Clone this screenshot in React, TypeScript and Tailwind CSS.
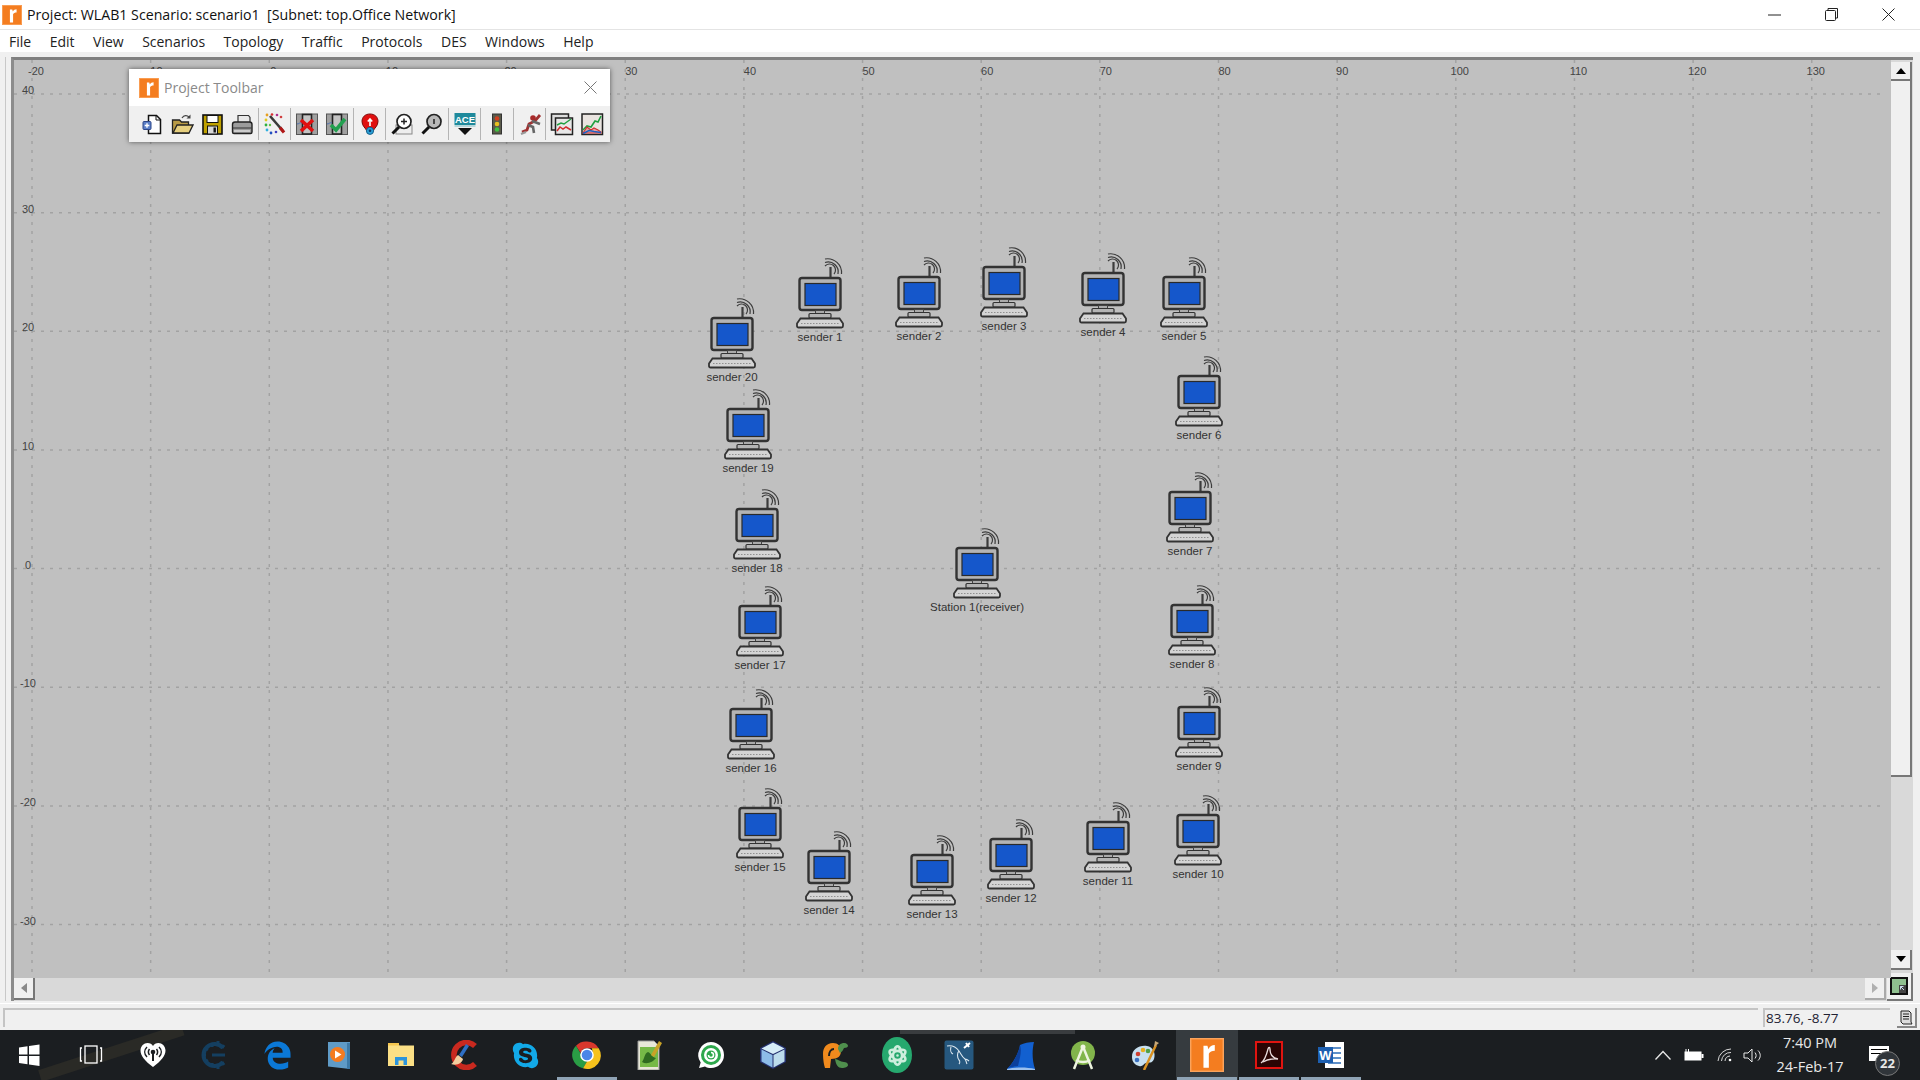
import { FaSkype, FaAtom } from 'react-icons/fa'
import { FaEdgeLegacy } from 'react-icons/fa6'

const menus = ['File', 'Edit', 'View', 'Scenarios', 'Topology', 'Traffic', 'Protocols', 'DES', 'Windows', 'Help']

// label centre in page pixels
const nodes = [
  { name: 'sender 1', x: 820, y: 337 },
  { name: 'sender 2', x: 919, y: 336 },
  { name: 'sender 3', x: 1004, y: 326 },
  { name: 'sender 4', x: 1103, y: 332 },
  { name: 'sender 5', x: 1184, y: 336 },
  { name: 'sender 6', x: 1199, y: 435 },
  { name: 'sender 7', x: 1190, y: 551 },
  { name: 'sender 8', x: 1192, y: 664 },
  { name: 'sender 9', x: 1199, y: 766 },
  { name: 'sender 10', x: 1198, y: 874 },
  { name: 'sender 11', x: 1108, y: 881 },
  { name: 'sender 12', x: 1011, y: 898 },
  { name: 'sender 13', x: 932, y: 914 },
  { name: 'sender 14', x: 829, y: 910 },
  { name: 'sender 15', x: 760, y: 867 },
  { name: 'sender 16', x: 751, y: 768 },
  { name: 'sender 17', x: 760, y: 665 },
  { name: 'sender 18', x: 757, y: 568 },
  { name: 'sender 19', x: 748, y: 468 },
  { name: 'sender 20', x: 732, y: 377 },
  { name: 'Station 1(receiver)', x: 977, y: 607 },
]

const CANVAS_X = 14
const CANVAS_Y = 60

const topLabels = ['-20', '-10', '0', '10', '20', '30', '40', '50', '60', '70', '80', '90', '100', '110', '120', '130']
const sideLabels = ['40', '30', '20', '10', '0', '-10', '-20', '-30']

function Station() {
  return (
    <svg width="60" height="74" viewBox="0 0 60 74" className="block">
      <g fill="none" stroke="#3c3c3c">
        <path d="M35 4a14 14 0 0 1 16.500 15" strokeWidth="1.200" />
        <path d="M35 7.500a10 10 0 0 1 13 11.500" strokeWidth="1.200" />
        <path d="M35 11a6 6 0 0 1 9 8" strokeWidth="1.200" />
        <path d="M40.500 12v11" strokeWidth="2.200" />
      </g>
      <rect x="9.500" y="23" width="41" height="32" rx="2.500" fill="#b4b4b4" stroke="#333" strokeWidth="2.400" />
      <rect x="15" y="28.500" width="31" height="22" fill="#1557cb" stroke="#2a2a2a" strokeWidth="1.200" />
      <rect x="25.500" y="55.500" width="9" height="3.500" fill="#aaa" stroke="#444" />
      <rect x="19" y="58.500" width="22" height="4.500" rx="1" fill="#b4b4b4" stroke="#333" strokeWidth="1.200" />
      <path d="M10.500 63.500h39l3.500 5v2.500c0 .8-.7 1.500-1.500 1.500h-43c-.8 0-1.500-.7-1.500-1.500v-2.500z" fill="#d4d4d4" stroke="#333" strokeWidth="1.800" />
      <path d="M11 68.500h38" stroke="#8f8f8f" strokeDasharray="1.500 1.500" />
    </svg>
  )
}

function Node({ name, x, y }: { name: string; x: number; y: number }) {
  return (
    <div className="absolute w-[140px] flex flex-col items-center" style={{ left: x - CANVAS_X - 70, top: y - CANVAS_Y - 82 }}>
      <Station />
      <span className="text-[11.5px] leading-[14px] mt-[1px] text-[#333] whitespace-nowrap" style={{ fontFamily: '"Liberation Sans", sans-serif' }}>{name}</span>
    </div>
  )
}

function LogoR({ size }: { size: number }) {
  return (
    <svg width={size} height={size} viewBox="0 0 24 24" className="block shrink-0">
      <rect width="24" height="24" fill="#f47d20" />
      <rect x="0.5" y="0.5" width="23" height="23" fill="none" stroke="#fba35c" />
      <path d="M9.500 21V5.500h2.800l.7 2.400C14 5.800 15.500 5 17.500 5v4c-2 0-3.600.6-4.200 2.200V21z" fill="#fff" />
    </svg>
  )
}

function ToolIcon({ n }: { n: number }) {
  const common = { width: 24, height: 24, viewBox: '0 0 24 24', className: 'block' }
  switch (n) {
    case 0:
      return (
        <svg {...common}>
          <path d="M8.500 3.500h8l4 4v14h-12z" fill="#fff" stroke="#111" strokeWidth="1.500" />
          <path d="M16 3.500v4.500h4.500" fill="none" stroke="#111" />
          <rect x="3" y="9.500" width="8" height="8" rx="1" fill="#5b7fc7" stroke="#2c4687" />
          <path d="M7 11.200v4.600M4.700 13.500h4.600" stroke="#fff" strokeWidth="1.400" />
        </svg>
      )
    case 1:
      return (
        <svg {...common}>
          <path d="M2.500 21V8h7l2 2h7v11z" fill="#b99b45" stroke="#222" strokeWidth="1.300" />
          <path d="M3 21l4-8h16l-4 8z" fill="#e6cf7e" stroke="#222" strokeWidth="1.300" />
          <path d="M12 6c2-3 5-3 7-1" fill="none" stroke="#444" strokeWidth="1.300" />
          <path d="M20.500 2.500v4h-4z" fill="#444" />
        </svg>
      )
    case 2:
      return (
        <svg {...common}>
          <rect x="3" y="3" width="19" height="19" fill="#bfa100" stroke="#111" strokeWidth="1.600" />
          <rect x="7" y="3.500" width="11" height="7" fill="#fff" stroke="#111" />
          <rect x="7.500" y="14" width="10" height="8" fill="#d8d8d8" stroke="#111" />
          <rect x="13.500" y="15.500" width="2.400" height="5" fill="#111" />
        </svg>
      )
    case 3:
      return (
        <svg {...common}>
          <path d="M8 11V3.500h10.500l1.500 2V11z" fill="#e8e8e8" stroke="#333" strokeWidth="1.200" />
          <path d="M2.500 12.500c0-1.500 1-2.500 2.500-2.500h14.500c1.500 0 2.500 1 2.500 2.500V20c0 1-.7 1.500-1.500 1.500H4c-1 0-1.500-.7-1.500-1.500z" fill="#9c9c9c" stroke="#222" strokeWidth="1.400" />
          <path d="M3 16h18.500" stroke="#333" />
          <path d="M4 19h16" stroke="#ddd" strokeWidth="1.500" />
        </svg>
      )
    case 4:
      return (
        <svg {...common}>
          <path d="M7 4l13 15" stroke="#3a3a3a" strokeWidth="2.600" />
          <path d="M17 15.500l4 5" stroke="#b01818" strokeWidth="3.200" />
          <g>
            <circle cx="4" cy="3" r="1.400" fill="#e8a020" />
            <circle cx="9" cy="2.500" r="1.300" fill="#d83030" />
            <circle cx="14" cy="3" r="1.300" fill="#b03090" />
            <circle cx="18" cy="5" r="1.300" fill="#d04040" />
            <circle cx="3" cy="8" r="1.400" fill="#e0c820" />
            <circle cx="3" cy="13" r="1.400" fill="#30b040" />
            <circle cx="4" cy="18" r="1.400" fill="#30b0e0" />
            <circle cx="7" cy="13" r="1.200" fill="#60c040" />
            <circle cx="8" cy="21" r="1.400" fill="#2050c0" />
            <circle cx="13" cy="20" r="1.300" fill="#4040c0" />
          </g>
        </svg>
      )
    case 5:
    case 6:
      return (
        <svg {...common}>
          <rect x="1.500" y="2" width="21" height="20.500" fill="#a0a0a0" stroke="#555" />
          <rect x="7.500" y="2.500" width="9" height="19.500" fill="#c4c4c4" stroke="#222" strokeWidth="1.600" />
          <path d="M2 12c2 0 3-2 5-1" fill="none" stroke="#4a6fb0" />
          {n === 5 ? (
            <path d="M6 8l12 11M18 8L6 19" stroke="#e01010" strokeWidth="3.600" />
          ) : (
            <path d="M6 13l5 5 9-11" fill="none" stroke="#22a050" strokeWidth="3.600" />
          )}
        </svg>
      )
    case 7:
      return (
        <svg {...common}>
          <path d="M12 2c5 0 8 3.200 8 7.500 0 4.500-3.500 6.500-5 9.500h-6c-1.500-3-5-5-5-9.500C4 5.200 7 2 12 2z" fill="#e01010" stroke="#7a0c0c" />
          <path d="M12 7v7M9.800 9.500L12 7l2.200 2.500" fill="none" stroke="#fff" strokeWidth="1.600" />
          <circle cx="12" cy="18.800" r="3.600" fill="#2aa0d8" stroke="#14608a" />
          <circle cx="12" cy="18.800" r="1.300" fill="#0d3a66" />
        </svg>
      )
    case 8:
    case 9:
      return (
        <svg {...common}>
          {n === 8 && <rect x="6" y="13" width="16" height="9" fill="#eee" stroke="#888" />}
          <circle cx="14" cy="9.500" r="7" fill={n === 8 ? '#fff' : '#b8b8b8'} stroke="#222" strokeWidth="1.700" />
          <path d="M9 15l-6.500 6.500" stroke="#111" strokeWidth="3" />
          <path d={n === 8 ? 'M11 9.500h6M14 6.500v6' : 'M14 7v5'} stroke="#222" strokeWidth="1.500" />
        </svg>
      )
    case 10:
      return (
        <svg {...common}>
          <rect x="1.500" y="1" width="21" height="12" fill="#1f8a9c" />
          <text x="12" y="11" textAnchor="middle" fontSize="9.500" fontWeight="700" fill="#fff" fontFamily='"Liberation Sans", sans-serif'>ACE</text>
          <rect x="1.500" y="13" width="21" height="2" fill="#b5d6da" />
          <path d="M5 16h14l-7 7z" fill="#111" />
        </svg>
      )
    case 11:
      return (
        <svg {...common}>
          <rect x="7.500" y="2" width="9" height="20" fill="#5a5a4a" stroke="#333" />
          <circle cx="12" cy="6.500" r="2.300" fill="#d04020" />
          <circle cx="12" cy="12" r="2.300" fill="#e8c020" />
          <circle cx="12" cy="17.500" r="2.300" fill="#40c040" />
        </svg>
      )
    case 12:
      return (
        <svg {...common}>
          <circle cx="15" cy="6" r="2.800" fill="#a82a2a" />
          <path d="M4 20l5-2 2-6 6-3 5-6" fill="none" stroke="#a03030" strokeWidth="2.800" />
          <path d="M10 13l5 2 1 6M14 9l8 3" fill="none" stroke="#666" strokeWidth="2.600" />
          <path d="M3 22l5-2" stroke="#999" strokeWidth="2.200" />
        </svg>
      )
    case 13:
      return (
        <svg {...common}>
          <rect x="1.500" y="2" width="17" height="16" fill="#ddd" stroke="#222" strokeWidth="1.500" />
          <rect x="5.500" y="6" width="17" height="16.500" fill="#e8e8e8" stroke="#222" strokeWidth="1.500" />
          <path d="M7 13l4-2 3 1 7-5" fill="none" stroke="#20a040" strokeWidth="1.500" />
          <path d="M7 19l3-4 3 2 3-2 5 3" fill="none" stroke="#d03030" strokeWidth="1.500" />
        </svg>
      )
    default:
      return (
        <svg {...common}>
          <rect x="2" y="2" width="20.500" height="20.500" fill="#e9e4e0" stroke="#222" strokeWidth="1.500" />
          <path d="M3 18l4-4 4 1 4-6 3 1 3-6" fill="none" stroke="#20a040" strokeWidth="1.600" />
          <path d="M3 21l4-6 4 3 3-2 4 2 3 2v1H3z" fill="#e8a0a0" stroke="#d03030" strokeWidth="1.200" />
          <path d="M3 21.500l6-3 5 1 7 1" fill="none" stroke="#2060c0" strokeWidth="1.600" />
        </svg>
      )
  }
}

function Sep() {
  return <div className="w-[2.5px] h-[32px] flex justify-center"><div className="w-px h-full bg-[#b4b4b4]" /></div>
}

function ToolBtn({ n }: { n: number }) {
  return <div className="w-[30px] flex justify-center"><ToolIcon n={n} /></div>
}

function ProjectToolbar() {
  return (
    <div className="absolute left-[115px] top-[9px] w-[481px] h-[73px] bg-white shadow-[0_0_5px_rgba(0,0,0,0.55)] flex flex-col">
      <div className="h-[37px] flex items-center pl-[10px] pr-[13px]">
        <LogoR size={20} />
        <span className="ml-[5px] text-[14px] text-[#8a8a8a]" style={{ fontFamily: '"Open Sans", sans-serif' }}>Project Toolbar</span>
        <svg width="13" height="13" viewBox="0 0 13 13" className="ml-auto">
          <path d="M.5.5l12 12M12.500.5l-12 12" stroke="#777" />
        </svg>
      </div>
      <div className="flex-1 bg-[#f0f0f0] flex items-center pl-[8px]">
        <ToolBtn n={0} /><ToolBtn n={1} /><ToolBtn n={2} /><ToolBtn n={3} />
        <Sep />
        <ToolBtn n={4} />
        <Sep />
        <ToolBtn n={5} /><ToolBtn n={6} />
        <Sep />
        <ToolBtn n={7} />
        <Sep />
        <ToolBtn n={8} /><ToolBtn n={9} />
        <Sep />
        <ToolBtn n={10} />
        <Sep />
        <ToolBtn n={11} />
        <Sep />
        <ToolBtn n={12} />
        <Sep />
        <ToolBtn n={13} /><ToolBtn n={14} />
      </div>
    </div>
  )
}

function TaskIcon({ n }: { n: number }) {
  const s = { width: 30, height: 30, viewBox: '0 0 30 30', className: 'block' }
  switch (n) {
    case 0:
      return (
        <svg {...s}>
          <path d="M5 7.500l8.500-1.200v8.200H5zM15 6l10.500-1.500v10H15zM5 16h8.500v8.200L5 23zM15 16h10.500v10L15 24.500z" fill="#fff" />
        </svg>
      )
    case 1:
      return (
        <svg {...s} fill="none" stroke="#fff" strokeWidth="1.300">
          <rect x="9" y="6" width="12" height="17" />
          <path d="M6 8H4.500v13H6M24 8h1.500v13H24" />
        </svg>
      )
    case 2:
      return (
        <svg {...s}>
          <path d="M15 27C7 21 2.500 16 2.500 10.500 2.500 6 6 3 9.500 3c2.500 0 4.500 1 5.500 3 1-2 3-3 5.500-3C24 3 27.500 6 27.500 10.500 27.500 16 23 21 15 27z" fill="#fff" />
          <g fill="none" stroke="#1b1e21" strokeWidth="1.500">
            <path d="M9 17c-3-3-3-7 0-10M21 17c3-3 3-7 0-10M11.500 15c-1.500-2-1.500-4 0-6M18.500 15c1.500-2 1.500-4 0-6" />
          </g>
          <circle cx="15" cy="12" r="2.300" fill="#1b1e21" />
          <path d="M14 13h2v8h-2z" fill="#1b1e21" />
        </svg>
      )
    case 3:
      return (
        <svg {...s} fill="none">
          <path d="M23 8A11 11 0 1 0 23 22" stroke="#143f60" strokeWidth="4" />
          <path d="M12 3v4M18 1v4M24 5l-2 3M5 8l3 2M2 15h4M5 22l3-2M12 27v-4M18 29v-4M24 25l-2-3" stroke="#143f60" strokeWidth="3" />
          <path d="M12 15h13" stroke="#143f60" strokeWidth="3" />
        </svg>
      )
    case 4:
      return <FaEdgeLegacy size={29} color="#0b78d6" className="block" />
    case 5:
      return (
        <svg {...s}>
          <path d="M4 2h22v27L4 26.500z" fill="#5f9bc7" />
          <path d="M23 3h3v26h-3z" fill="#3d7aa8" />
          <circle cx="13.500" cy="14.500" r="7.500" fill="#f47b20" />
          <path d="M11 10.500l6.500 4-6.500 4z" fill="#fff" />
        </svg>
      )
    case 6:
      return (
        <svg {...s}>
          <path d="M2 3h10l1.500 2.500H28V26H2z" fill="#fbdf85" />
          <rect x="2" y="3" width="11" height="2.500" fill="#f5c64f" />
          <path d="M9 25v-8h12v8h-3.500v-4.500h-5V25z" fill="#2b94dc" />
        </svg>
      )
    case 7:
      return (
        <svg {...s}>
          <path d="M27 6A12.500 12.500 0 1 0 27 24" fill="none" stroke="#c9291f" strokeWidth="5.500" />
          <path d="M18 4l3 2-7 11-3-2z" fill="#2f6fc4" />
          <path d="M3 24c3-1 4-7 7-9l5 4c-1 4-6 7-12 5z" fill="#f2cfa0" />
        </svg>
      )
    case 8:
      return <FaSkype size={29} color="#12a9e8" className="block" />
    case 9:
      return (
        <svg {...s}>
          <path d="M15 1.500A13.500 13.500 0 0 1 26.700 8.200H15A6.800 6.800 0 0 0 8.500 13L4 5.700A13.500 13.500 0 0 1 15 1.500z" fill="#d9382c" />
          <path d="M4 5.700L9.500 15 15 21.800 11 28.300A13.500 13.500 0 0 1 4 5.700z" fill="#2a9d45" />
          <path d="M26.700 8.200A13.500 13.500 0 0 1 11 28.300l6-10 3.800-6.500-1-3.600z" fill="#f6c21c" />
          <circle cx="15" cy="15" r="6.800" fill="#fff" />
          <circle cx="15" cy="15" r="5.300" fill="#4a86e8" />
        </svg>
      )
    case 10:
      return (
        <svg {...s}>
          <path d="M4 1h16l5 5v24H4z" fill="#e8e8d8" stroke="#999" />
          <rect x="6" y="7" width="18" height="20" fill="#76b947" />
          <path d="M8 22c3-4 2-8 6-10 3 1 3 5 8 6-3 4-9 7-14 4z" fill="#2f6b20" />
          <path d="M25 1l3 2-8 14-3-2z" fill="#c9a227" />
        </svg>
      )
    case 11:
      return (
        <svg {...s}>
          <path d="M15 2a13 13 0 0 1 0 26c-2.200 0-4.300-.5-6-1.500L3 28l1.700-5.500A13 13 0 0 1 15 2z" fill="#fff" />
          <circle cx="15" cy="15" r="10" fill="#2ea84c" />
          <circle cx="15" cy="15" r="7" fill="#fff" />
          <circle cx="15" cy="15" r="4.500" fill="#2ea84c" />
          <path d="M15 12.500a2.500 2.500 0 1 1-2.500 2.500" fill="none" stroke="#fff" strokeWidth="1.500" />
        </svg>
      )
    case 12:
      return (
        <svg {...s}>
          <path d="M15 1L28 8v14l-13 7L2 22V8z" fill="#24306e" />
          <path d="M15 2.500L26.500 8.500 15 14 3.500 8.500z" fill="#d5ecf7" />
          <path d="M3.500 9.500L14.500 15v12.500L3.500 21.500z" fill="#8dbce8" />
          <path d="M26.500 9.500L15.500 15v12.500l11-6z" fill="#bcdcec" />
        </svg>
      )
    case 13:
      return (
        <svg {...s}>
          <path d="M13 3C6 3 3 8 3 14s1 11 2 14h5l1-9c7 0 10-3 10-8 0-5-3-8-8-8z" fill="#f08a1d" />
          <path d="M9 16c0-4 2-7 5-7" fill="none" stroke="#1b1e21" strokeWidth="2" />
          <path d="M18 9c0-4 3-6 6-6s4 2 4 3-2 2-4 2c-1 2-2 4-4 5z" fill="#4f8f4d" />
          <path d="M15 19c3 0 5 3 9 3 2 0 4 1 4 3s-3 3-6 3c-4 0-6-3-7-9z" fill="#4f8f4d" />
        </svg>
      )
    case 14:
      return (
        <div className="w-[30px] h-[36px] rounded-[50%] bg-[#26a86e] flex items-center justify-center">
          <FaAtom size={21} color="#cdeedd" />
        </div>
      )
    case 15:
      return (
        <svg width="30" height="30" viewBox="0 0 30 30" className="block">
          <rect x=".5" y=".5" width="29" height="29" rx="2" fill="#26587f" />
          <path d="M3 6c5-1 9 1 12 5 2 3 3 6 6 8 1 1 1 3 2 5M7 7c-1 3 0 6 2 7M15 11c-2 2-2 6 0 9 1 1 1 3 0 4M21 19c2 0 3 1 4 2" fill="none" stroke="#dbe7ef" strokeWidth="1.100" />
          <path d="M20 8l6-5M22 3l3 4" stroke="#fff" strokeWidth="2" />
        </svg>
      )
    case 16:
      return (
        <svg {...s}>
          <path d="M1 29C8 22 13 12 14 5c4-2 9-3 14-3-2 8-2 18 1 27z" fill="#1260d0" />
          <path d="M1 29c8-2 20-2 28 0v1H1z" fill="#9bc0ee" />
          <path d="M14 5c-1 7-6 17-12 23 3-1 8-2 10-2 2-8 4-15 2-21z" fill="#0b3f9c" />
        </svg>
      )
    case 17:
      return (
        <svg {...s}>
          <circle cx="15" cy="13" r="12" fill="#82b54b" />
          <path d="M6 29l8-20h2l8 20M8 20c5 3 9 3 14 0" fill="none" stroke="#eef4e0" strokeWidth="2.500" />
          <circle cx="15" cy="7" r="2.500" fill="#eef4e0" />
        </svg>
      )
    case 18:
      return (
        <svg {...s}>
          <path d="M2 17C2 9 9 5 17 6c6 1 9 7 7 13-2 5-5 3-8 4s-3 4-7 3c-4-1-7-4-7-9z" fill="#c8e0f0" />
          <circle cx="8" cy="14" r="2.300" fill="#d04030" />
          <circle cx="13" cy="10" r="2.300" fill="#e8b020" />
          <circle cx="18" cy="11" r="2.300" fill="#4fa04a" />
          <circle cx="7" cy="20" r="2.300" fill="#3a70c0" />
          <path d="M14 30L26 5" stroke="#d89020" strokeWidth="2.500" />
          <path d="M24 7l1-6 4 2z" fill="#c9a878" />
        </svg>
      )
    case 19:
      return <LogoR size={34} />
    case 20:
      return (
        <svg {...s}>
          <rect x="2" y="2" width="26" height="26" fill="#2a0504" stroke="#e01410" strokeWidth="2" />
          <path d="M7 23c3-2 5-6 7-14 .5-2 2-2 2 0 0 5 3 9 8 10-5-.5-11 .5-15 3" fill="none" stroke="#e8dcdc" strokeWidth="1.300" />
        </svg>
      )
    default:
      return (
        <svg {...s}>
          <path d="M9 2h19v26H9z" fill="#fff" />
          <path d="M12 8h13M16 13h9M16 18h9M12 23h13" stroke="#2b6cb8" strokeWidth="1.500" />
          <rect x="2" y="7" width="15" height="16" fill="#1d5fb0" />
          <text x="9.500" y="20" textAnchor="middle" fontSize="13" fontWeight="700" fill="#fff" fontFamily='"Liberation Sans", sans-serif'>W</text>
        </svg>
      )
  }
}

const taskIcons = Array.from({ length: 22 }, (_, i) => i)

export default function App() {
  return (
    <div className="w-[1920px] h-[1080px] overflow-hidden flex flex-col bg-[#f0f0f0] text-black" style={{ fontFamily: '"Open Sans", sans-serif' }}>
      {/* Title bar */}
      <div className="h-[30px] shrink-0 bg-white border-b border-[#e4e4e4] flex items-center">
        <div className="ml-[2px]"><LogoR size={20} /></div>
        <span className="ml-[5px] text-[14.2px] whitespace-pre text-[#111]">Project: WLAB1 Scenario: scenario1  [Subnet: top.Office Network]</span>
        <div className="ml-auto mr-[3px] flex items-center">
          <div className="w-[57px] flex justify-center">
            <svg width="13" height="2" viewBox="0 0 13 2"><path d="M0 1h13" stroke="#222" /></svg>
          </div>
          <div className="w-[57px] flex justify-center">
            <svg width="13" height="13" viewBox="0 0 13 13" fill="none" stroke="#222"><rect x=".5" y="2.500" width="10" height="10" rx="1" /><path d="M3 2.500V.5h9.500v9.500h-2" /></svg>
          </div>
          <div className="w-[57px] flex justify-center">
            <svg width="13" height="13" viewBox="0 0 13 13"><path d="M.5.5l12 12M12.500.5l-12 12" stroke="#222" /></svg>
          </div>
        </div>
      </div>

      {/* Menu */}
      <div className="h-[22px] shrink-0 bg-white flex items-center pl-[9px] gap-[18.5px] text-[14px] text-[#222]">
        {menus.map((m) => (
          <span key={m}>{m}</span>
        ))}
      </div>

      {/* Workspace */}
      <div className="flex-1 min-h-0 pt-[5px] pb-[2px] pl-[5px] pr-[7px] flex flex-col">
        <div className="flex-1 min-h-0 border-l border-[#c8c8c8] pl-[5px] flex flex-col">
          <div className="flex-1 min-h-0 flex flex-col border-t-[3px] border-l-[3px] border-t-[#808080] border-l-[#8c8c8c]">
            <div className="flex-1 min-h-0 flex">
              <div className="relative flex-1 bg-[#c0c0c0] overflow-hidden">
                <svg className="absolute inset-0 w-full h-full">
                  {Array.from({ length: 16 }, (_, i) => (
                    <line key={i} x1={18 + i * 118.65} x2={18 + i * 118.65} y1="0" y2="918" stroke="#a2a2a2" strokeWidth="1.500" strokeDasharray="3 6" />
                  ))}
                  {Array.from({ length: 8 }, (_, i) => (
                    <line key={i} y1={34 + i * 118.65} y2={34 + i * 118.65} x1="0" x2="1872" stroke="#a2a2a2" strokeWidth="1.500" strokeDasharray="3 6" />
                  ))}
                </svg>
                {topLabels.map((l, i) => (
                  <span key={l} className="absolute top-[4px] w-[30px] text-center text-[11px] leading-[14px] text-[#444]" style={{ left: 7 + i * 118.65 + (i >= 5 && i <= 10 ? 2 : i === 11 ? 1 : 0), fontFamily: '"Liberation Sans", sans-serif' }}>{l}</span>
                ))}
                {sideLabels.map((l, i) => (
                  <span key={l} className="absolute left-[2px] w-[24px] text-center text-[11px] leading-[14px] text-[#444]" style={{ top: 23 + i * 118.65, fontFamily: '"Liberation Sans", sans-serif' }}>{l}</span>
                ))}
                {nodes.map((n) => (
                  <Node key={n.name} {...n} />
                ))}
                <ProjectToolbar />
              </div>
              {/* Vertical scrollbar */}
              <div className="w-[22px] shrink-0 bg-[#d9d9d9] flex flex-col pt-[2px] pb-[8px] pr-[1px]">
                <div className="h-[19px] bg-[#f0f0f0] border-r-2 border-b-2 border-[#777] flex items-center justify-center">
                  <div className="w-0 h-0 border-x-[5px] border-x-transparent border-b-[6px] border-b-black" />
                </div>
                <div className="h-[696px] bg-[#f0f0f0] border-r-2 border-b-2 border-[#777]" />
                <div className="flex-1" />
                <div className="h-[20px] bg-[#f0f0f0] border-r-2 border-b-2 border-[#777] flex items-center justify-center">
                  <div className="w-0 h-0 border-x-[5px] border-x-transparent border-t-[6px] border-t-black" />
                </div>
              </div>
            </div>
            {/* Horizontal scrollbar */}
            <div className="h-[23px] shrink-0 flex">
              <div className="flex-1 bg-[#d9d9d9] flex justify-between pb-[1px] pr-[1px]">
                <div className="w-[21px] bg-[#f0f0f0] border-r-2 border-b-2 border-[#777] flex items-center justify-center">
                  <div className="w-0 h-0 border-y-[5px] border-y-transparent border-r-[6px] border-r-[#8a8a8a]" />
                </div>
                <div className="w-[21px] bg-[#f0f0f0] border-r-2 border-b-2 border-[#aaa] flex items-center justify-center">
                  <div className="w-0 h-0 border-y-[5px] border-y-transparent border-l-[6px] border-l-[#b0b0b0]" />
                </div>
              </div>
              <div className="w-[26px] mt-[-5px] shrink-0 bg-[#f0f0f0] border-r-2 border-b-2 border-[#777] flex items-center justify-center">
                <svg width="18" height="18" viewBox="0 0 18 18">
                  <rect x="1" y="1" width="16" height="16" fill="#8fc08f" stroke="#111" strokeWidth="2" />
                  <rect x="9" y="8" width="7" height="8" fill="#444" />
                  <path d="M10.500 9.500l3.500 3.500M10.500 9.500h3M10.500 9.500v3" stroke="#cde" />
                </svg>
              </div>
            </div>
          </div>
        </div>
      </div>

      {/* Status bar */}
      <div className="h-[27px] shrink-0 flex items-start pt-[4px] pl-[3px] pr-[3px] gap-[5px] border-t border-white">
        <div className="flex-1 h-[19px] bg-[#f0f0f0] border-l-2 border-t-2 border-[#c4c4c4]" />
        <div className="w-[127px] h-[19px] bg-[#f0f0f0] border-l-2 border-t-2 border-[#c4c4c4] flex items-center pl-[1px] text-[13.5px] text-[#223] whitespace-nowrap">83.76, -8.77</div>
        <div className="w-[20px] h-[20px] ml-[2px] bg-[#f0f0f0] border-r-2 border-b-2 border-[#888] flex items-center justify-center">
          <svg width="14" height="15" viewBox="0 0 14 15" fill="#ddd" stroke="#222">
            <path d="M2 1h8l2 2v9l1 2H4l-2-2z" />
            <path d="M4 4h6M4 6.500h6M4 9h6" />
          </svg>
        </div>
      </div>

      {/* Taskbar */}
      <div className="h-[50px] shrink-0 bg-[#1b1e21] flex items-center text-white relative overflow-hidden">
        <div className="absolute left-[900px] top-0 w-[175px] h-[4px] bg-[#393c3f]" />
        <div className="absolute left-[40px] top-[-20px] w-[150px] h-[12px] bg-[#2a2a26] rotate-[-18deg] origin-left translate-y-[60px]" />
        <div className="flex items-center h-full ml-[-2px]">
          {taskIcons.map((i) => (
            <div key={i} className={`relative w-[62px] h-full flex items-center justify-center ${i === 19 ? 'bg-[#363b3f]' : ''}`}>
              <TaskIcon n={i} />
              {(i === 9 || i === 19 || i === 20 || i === 21) && (
                <div className="absolute bottom-0 left-[1px] right-[1px] h-[3px] bg-[#8fa3b5]" />
              )}
            </div>
          ))}
        </div>
        <div className="ml-auto flex items-center h-full text-[#e8e8e8] relative">
          <svg width="16" height="10" viewBox="0 0 16 10" fill="none" stroke="#e8e8e8" strokeWidth="1.300"><path d="M.5 9.500L8 1.500l7.500 8" /></svg>
          <svg width="20" height="12" viewBox="0 0 20 12" className="ml-[13px]">
            <path d="M2 0v3M4.500 0v3" stroke="#fff" />
            <rect x="1" y="3" width="16" height="8" fill="#fff" stroke="#fff" />
            <rect x="17.500" y="5" width="2" height="4" fill="#fff" />
          </svg>
          <svg width="16" height="14" viewBox="0 0 16 14" fill="none" stroke="#d8d8d8" className="ml-[13px]">
            <path d="M1 13A13 13 0 0 1 14 1M4.500 13A9 9 0 0 1 14 4.500M8 13a5.500 5.500 0 0 1 5-5" />
            <circle cx="13" cy="12" r="1.300" fill="#fff" stroke="none" />
          </svg>
          <svg width="20" height="15" viewBox="0 0 20 15" fill="none" stroke="#e8e8e8" className="ml-[10px]">
            <path d="M1 5h4l4-4v13l-4-4H1z" />
            <path d="M12 4.500c1.500 2 1.500 4 0 6M15 2.500c3 3 3 7 0 10" />
          </svg>
          <div className="w-[104px] ml-[-5px] flex flex-col items-center text-[14.5px] leading-[24px]">
            <span>7:40 PM</span>
            <span>24-Feb-17</span>
          </div>
          <div className="relative w-[50px] h-full mr-[8px]">
            <div className="absolute left-[7px] top-[16px] w-[20px] h-[15px] bg-white flex flex-col gap-[3px] pt-[3px] pb-[1px] px-[2px]">
              <div className="h-px bg-black" />
              <div className="h-px bg-black" />
            </div>
            <div className="absolute left-[13px] top-[21px] w-[25px] h-[25px] rounded-full bg-[#30353a] border border-[#777] flex items-center justify-center text-[13px] font-bold">22</div>
          </div>
        </div>
      </div>
    </div>
  )
}
